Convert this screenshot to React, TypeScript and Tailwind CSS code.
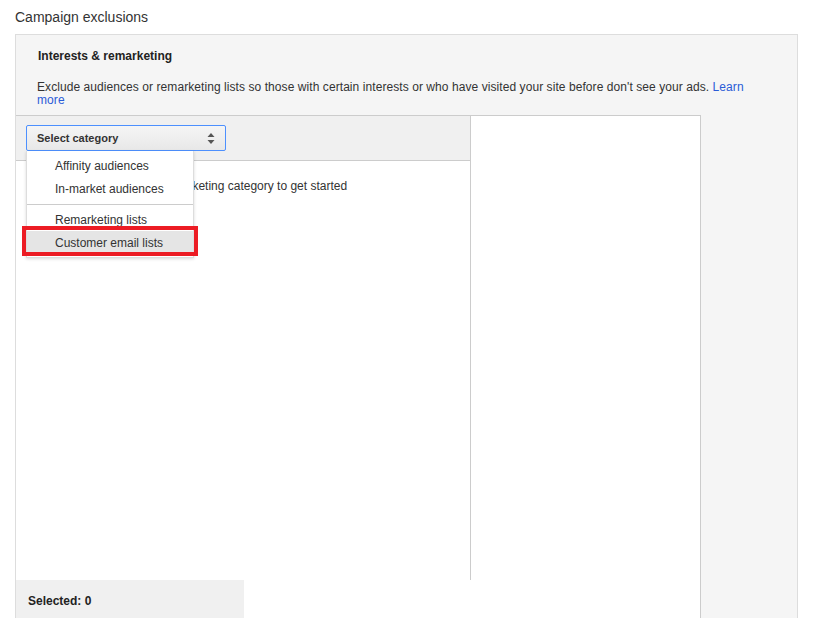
import React from 'react'

const menuItems = [
    { id: 1, label: "Affinity audiences" },
    { id: 2, label: "In-market audiences", divider: true },
    { id: 3, label: "Remarketing lists" },
    { id: 4, label: "Customer email lists", active: true },
]

const SortArrows = () => (
    <svg width="8" height="11" viewBox="0 0 8 11" className="fill-[#555]">
        <path d="M4 0 L7.5 4 L0.5 4 Z" />
        <path d="M4 11 L7.5 7 L0.5 7 Z" />
    </svg>
)

const App = () => {
    return (
        <div className="w-[815px] h-[618px] overflow-hidden bg-white flex flex-col font-['Liberation_Sans',Arial,sans-serif] text-[#333]">
            <div className="pl-[15px] pt-[7px] h-[34px] text-[14px] leading-[20px] text-[#333]">
                Campaign exclusions
            </div>

            <div className="ml-[15px] w-[783px] flex-1 border border-[#ddd] border-b-0 bg-[#f5f5f5] flex flex-col">
                <div className="pl-[22px] pt-[13px] text-[12px] font-bold leading-[16px] text-[#222]">
                    Interests &amp; remarketing
                </div>
                <p className="pl-[21px] pt-[17px] w-[735px] text-[12px] leading-[13px] tracking-[0.07px] text-[#333]">
                    Exclude audiences or remarketing lists so those with certain interests or who have visited your site before don't see your ads. <a className="text-[#2a5bd7]">Learn more</a>
                </p>

                <div className="mt-[8px] w-[685px] flex-1 flex flex-col bg-white border-t border-r border-[#ccc]">
                    <div className="flex h-[464px]">
                        <div className="w-[454px] flex flex-col relative">
                            <div className="h-[45px] bg-[#f0f0f0] border-b border-[#ccc] pl-[10px] pt-[9px]">
                                <div className="w-[200px] h-[26px] border border-[#4d90fe] rounded-[2px] bg-gradient-to-b from-[#f5f5f5] to-[#e8e8e8] flex items-center justify-between pl-[10px] pr-[10px]">
                                    <span className="text-[11px] font-bold text-[#333]">Select category</span>
                                    <SortArrows />
                                </div>
                            </div>
                            <div className="pl-[35px] pt-[18px] text-[12px] leading-[14px] text-[#333]">
                                Select an interest or remarketing category to get started
                            </div>

                            <div className="absolute left-[10px] top-[35px] w-[168px] bg-white border border-[#ddd] border-t-0 shadow-[0_1px_3px_rgba(0,0,0,0.15)] py-[3px] text-[12px] text-[#333]">
                                {menuItems.map(item => (
                                    <React.Fragment key={item.id}>
                                        <div className={item.active ? "h-[23px] pl-[28px] flex items-center bg-[#e5e5e5]" : "h-[23px] pl-[28px] flex items-center"}>
                                            {item.label}
                                        </div>
                                        {item.divider && <div className="mt-[4px] mb-[3px] border-t border-[#ccc]" />}
                                    </React.Fragment>
                                ))}
                            </div>
                            <div className="absolute left-[6px] top-[110px] w-[176px] h-[30px] border-4 border-[#ec1c24]" />
                        </div>
                        <div className="flex-1 border-l border-[#ccc]" />
                    </div>
                    <div className="flex-1">
                        <div className="w-[228px] h-full bg-[#f0f0f0] pl-[12px] pt-[12px] text-[12px] font-bold text-[#222]">
                            Selected: 0
                        </div>
                    </div>
                </div>
            </div>
        </div>
    )
}

export default App
